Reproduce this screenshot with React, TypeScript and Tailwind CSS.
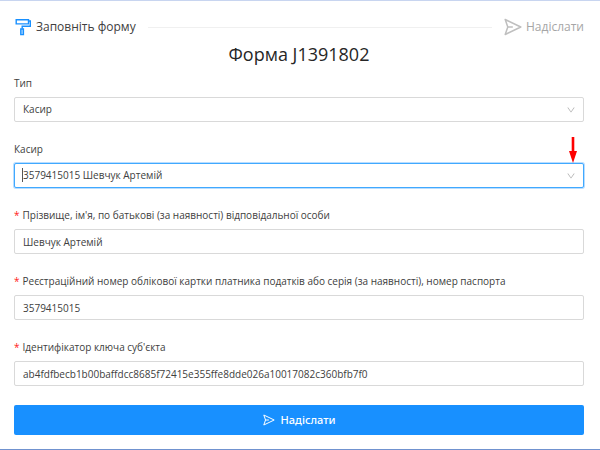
import { useState, type ReactNode } from 'react';
import { AiOutlineDown } from 'react-icons/ai';

const CASHIER = 'Шевчук Артемій';
const TAX_NUMBER = '3579415015';
const KEY_ID = 'ab4fdfbecb1b00baffdcc8685f72415e355ffe8dde026a10017082c360bfb7f0';

const RollerIcon = ({ className }: { className: string }) => (
  <svg
    className={className}
    viewBox="0 0 18 18"
    fill="none"
    stroke="currentColor"
    strokeWidth="1.4"
  >
    <path d="M2.2 1.7h12.3v4.2H2.2z" />
    <path d="M14.5 3h1.8v5.3H8.2v2.5" />
    <path d="M6.8 11h2.6v5.6H6.8z" fill="currentColor" fillOpacity="0.35" />
  </svg>
);

const SendIcon = ({ className }: { className: string }) => (
  <svg
    className={className}
    viewBox="0 0 18 18"
    fill="none"
    stroke="currentColor"
    strokeWidth="1.5"
    strokeLinejoin="round"
  >
    <path d="M1.2 1.5 16.8 9 1.2 16.5 3.8 9z" />
    <path d="M3.8 9h5" />
  </svg>
);

interface FieldProps {
  id: string;
  label: string;
  required?: boolean;
  children: ReactNode;
}

const Field = ({ id, label, required, children }: FieldProps) => (
  <div className="flex flex-col gap-[5px]">
    <label htmlFor={id} className="flex h-[18px] items-center gap-[3px]">
      {required && <span className="font-medium text-[#ff2020]">*</span>}
      {label}
    </label>
    {children}
  </div>
);

interface SelectFieldProps {
  id: string;
  label: string;
  options: string[];
  active?: boolean;
}

const SelectField = ({ id, label, options, active }: SelectFieldProps) => (
  <Field id={id} label={label}>
    <div className="relative">
      <select
        id={id}
        className={`block h-[25px] w-full appearance-none rounded-xs border bg-white px-2 outline-none ${
          active
            ? 'border-[#40a9ff] shadow-[0_0_0_1px_rgba(24,144,255,0.3)]'
            : 'border-[#d9d9d9]'
        }`}
      >
        {options.map((option) => (
          <option key={option}>{option}</option>
        ))}
      </select>
      {active && (
        <>
          <span className="pointer-events-none absolute top-[5px] left-2 h-[14px] w-px bg-[#555]" />
          <svg
            className="pointer-events-none absolute right-[6px] bottom-full h-[26px] w-[10px]"
            viewBox="0 0 10 26"
            fill="#fe0000"
          >
            <path d="M3.7 0h2.6v14H9L5 26 1 14h2.7z" />
          </svg>
        </>
      )}
      <AiOutlineDown className="pointer-events-none absolute top-2 right-2 size-[10px] text-[#b0b0b0]" />
    </div>
  </Field>
);

interface TextFieldProps {
  id: string;
  label: string;
  initial: string;
}

const TextField = ({ id, label, initial }: TextFieldProps) => {
  const [value, setValue] = useState(initial);

  return (
    <Field id={id} label={label} required>
      <input
        id={id}
        type="text"
        required
        value={value}
        onChange={(e) => setValue(e.target.value)}
        className="h-[25px] w-full rounded-xs border border-[#d9d9d9] bg-white px-2 outline-none"
      />
    </Field>
  );
};

export default function App() {
  return (
    <main className="border-t border-b border-t-[#c8d5f0] border-b-[#7092cf] bg-white pt-[14px] pr-4 pb-[14px] pl-[14px] font-['Open_Sans','Noto_Sans',sans-serif] text-[10px] text-[#404040]">
      <div className="flex h-6 items-center gap-1 text-xs">
        <RollerIcon className="size-[18px] text-[#1890ff]" />
        <span>Заповніть форму</span>
        <span className="mx-2 h-px flex-1 bg-[#f0f0f0]" />
        <SendIcon className="size-[18px] text-[#bfbfbf]" />
        <span className="text-[#a6a6a6]">Надіслати</span>
      </div>

      <h1 className="mt-[3px] text-center text-lg leading-6 text-[#262626]">
        Форма J1391802
      </h1>

      <form
        className="mt-2 flex flex-col gap-[18px]"
        onSubmit={(e) => e.preventDefault()}
      >
        <SelectField id="type" label="Тип" options={['Касир']} />
        <SelectField
          id="cashier"
          label="Касир"
          options={[`${TAX_NUMBER} ${CASHIER}`]}
          active
        />
        <TextField
          id="name"
          label="Прізвище, ім'я, по батькові (за наявності) відповідальної особи"
          initial={CASHIER}
        />
        <TextField
          id="tax-number"
          label="Реєстраційний номер облікової картки платника податків або серія (за наявності), номер паспорта"
          initial={TAX_NUMBER}
        />
        <TextField
          id="key-id"
          label="Ідентифікатор ключа суб'єкта"
          initial={KEY_ID}
        />
        <button
          type="submit"
          className="mt-px flex h-[30px] items-center justify-center gap-[6px] rounded-xs bg-[#1890ff] font-['Noto_Sans',sans-serif] text-[11px] font-medium text-white"
        >
          <SendIcon className="size-3" />
          Надіслати
        </button>
      </form>
    </main>
  );
}
